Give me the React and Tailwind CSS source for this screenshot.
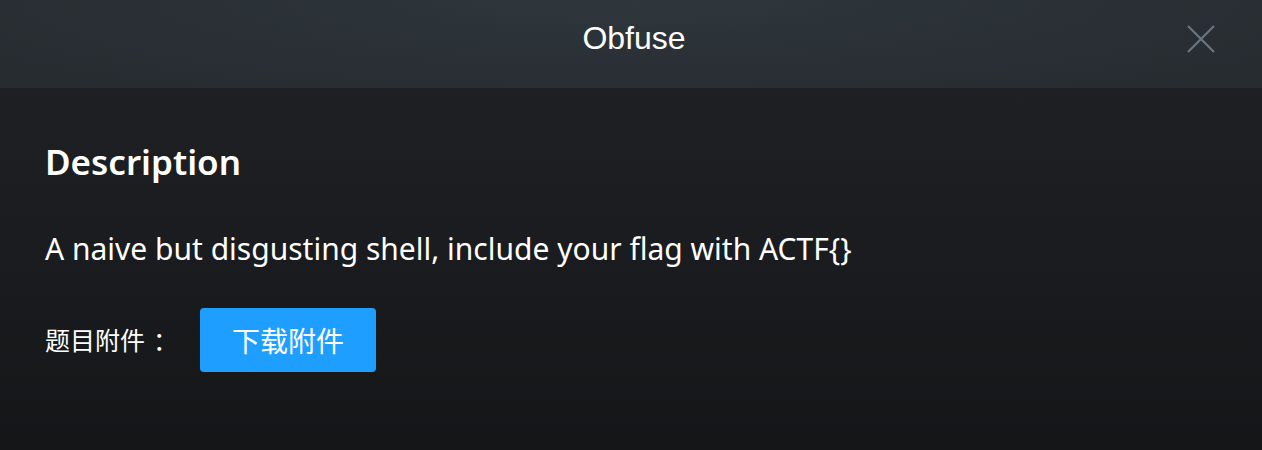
import React from 'react';

export default function App() {
  return (
    <div className="w-[1262px] h-[450px] flex flex-col overflow-hidden bg-[linear-gradient(to_bottom,#202327,#151618)]">
      <div className="relative h-[88px] pb-[12px] flex items-center justify-center bg-[radial-gradient(ellipse_at_50%_0%,#2f373d_0%,#2a3035_50%,#262b30_100%)]">
        <span className="ml-[6px] text-[32px] text-white font-['Liberation_Sans',sans-serif]">Obfuse</span>
        <button className="absolute right-[46px] top-[24px] w-[30px] h-[30px] flex items-center justify-center">
          <svg width="30" height="30" viewBox="0 0 30 30" fill="none" stroke="#6b7580" strokeWidth="2.2">
            <path d="M2 2L28 28M28 2L2 28" />
          </svg>
        </button>
      </div>
      <div className="flex flex-col px-[45px] pt-[50px] font-['Noto_Sans','Noto_Sans_CJK_SC',sans-serif] text-white">
        <h2 className="text-[35px] font-semibold leading-[48px]">Description</h2>
        <p className="mt-[43px] text-[30px] leading-[40px]">A naive but disgusting shell, include your flag with ACTF{'{}'}</p>
        <div className="mt-[39px] flex items-center">
          <span className="text-[25px] w-[155px] font-['Noto_Sans_CJK_SC',sans-serif]">
            题目附件<span className="ml-[8px]">：</span>
          </span>
          <button className="w-[176px] h-[64px] rounded-[4px] bg-[#1e9fff] text-[28px] text-white font-['Noto_Sans_CJK_SC',sans-serif]">下载附件</button>
        </div>
      </div>
    </div>
  );
}
